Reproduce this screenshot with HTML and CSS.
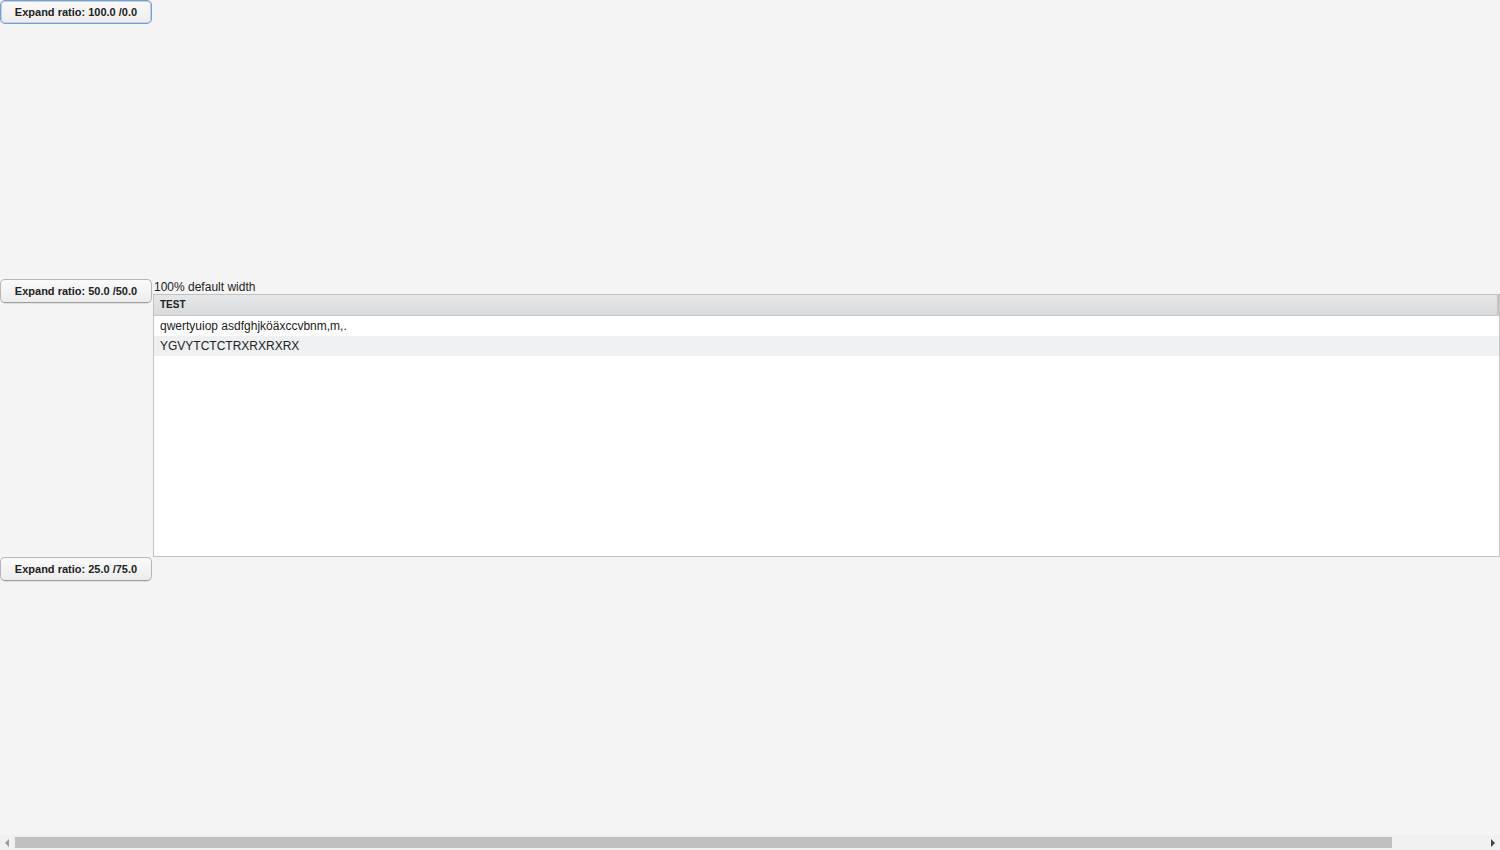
FILE: index.html
```html
<!DOCTYPE html>
<html>
<head>
<meta charset="utf-8">
<link rel="stylesheet" href="styles.css">
</head>
<body>
<div class="app">
  <div class="content">
    <div class="section first">
      <div class="btncol"><button class="btn focused">Expand ratio: 100.0 /0.0</button></div>
      <div class="main"></div>
    </div>
    <div class="section">
      <div class="btncol"><button class="btn">Expand ratio: 50.0 /50.0</button></div>
      <div class="main">
        <div class="caption">100% default width</div>
        <div class="table">
          <div class="thead"><div class="th">TEST</div><div class="thend"></div></div>
          <div class="tbody">
            <div class="row">qwertyuiop asdfghjköäxccvbnm,m,.</div>
            <div class="row odd">YGVYTCTCTRXRXRXRX</div>
          </div>
        </div>
      </div>
    </div>
    <div class="section last">
      <div class="btncol"><button class="btn">Expand ratio: 25.0 /75.0</button></div>
      <div class="main"></div>
    </div>
  </div>
  <div class="hscroll">
    <div class="arrow left"></div>
    <div class="track"><div class="thumb"></div></div>
    <div class="arrow right"></div>
  </div>
</div>
</body>
</html>
```
FILE: styles.css
```css
html, body {
  margin: 0;
  padding: 0;
  background: #f4f4f4;
  font-family: "Liberation Sans", Arial, sans-serif;
  color: #222;
}
.app {
  width: 1500px;
  height: 850px;
  display: flex;
  flex-direction: column;
  overflow: hidden;
}
.content {
  flex: 1;
  display: flex;
  flex-direction: column;
}
.section {
  height: 278px;
  display: flex;
}
.section.first { height: 279px; }
.section.last { flex: 1; }
.btncol {
  width: 152px;
  flex: none;
}
.btn {
  width: 152px;
  height: 24px;
  margin: 0;
  padding: 0;
  border: 1px solid #b6b6b6;
  border-bottom-color: #9d9d9d;
  border-radius: 5px;
  background: linear-gradient(#fafafa, #ececec);
  font-family: "Liberation Sans", Arial, sans-serif;
  font-size: 11px;
  font-weight: bold;
  color: #222;
  box-shadow: 0 1px 1px rgba(0,0,0,0.08);
}
.btn.focused {
  border-color: #7a9ccc;
  box-shadow: 0 0 0 1px #bcd2ef inset;
}
.main {
  flex: 1;
  display: flex;
  flex-direction: column;
  padding-left: 1px;
  min-width: 0;
}
.caption {
  font-size: 12px;
  line-height: 15px;
  padding-left: 1px;
  padding-top: 1px;
  height: 14px;
  color: #222;
}
.table {
  flex: 1;
  background: #fff;
  border: 1px solid #c2c2c2;
  border-right-color: #c8c8c8;
  display: flex;
  flex-direction: column;
}
.thead {
  height: 20px;
  display: flex;
  background: linear-gradient(#e6e7e8, #d9dadc);
  border-bottom: 1px solid #c5c6c8;
}
.th {
  flex: 1;
  font-size: 10px;
  font-weight: bold;
  line-height: 20px;
  padding-left: 6px;
  color: #222;
}
.thend {
  width: 2px;
  background: #c4c4c4;
}
.row {
  height: 20px;
  line-height: 20px;
  font-size: 12px;
  padding-left: 6px;
  color: #222;
}
.row.odd { background: #eff0f1; }
.hscroll {
  height: 15px;
  display: flex;
  align-items: stretch;
  background: #f0f0f0;
}
.arrow {
  width: 15px;
  position: relative;
}
.arrow::after {
  content: "";
  position: absolute;
  top: 4px;
  width: 0;
  height: 0;
  border-top: 4px solid transparent;
  border-bottom: 4px solid transparent;
}
.arrow.left::after { left: 5px; border-right: 4px solid #9a9a9a; }
.arrow.right::after { left: 6px; border-left: 4px solid #444; }
.track {
  flex: 1;
  padding: 2px 0;
}
.thumb {
  width: 1377px;
  height: 100%;
  background: #c0c0c0;
}
```
